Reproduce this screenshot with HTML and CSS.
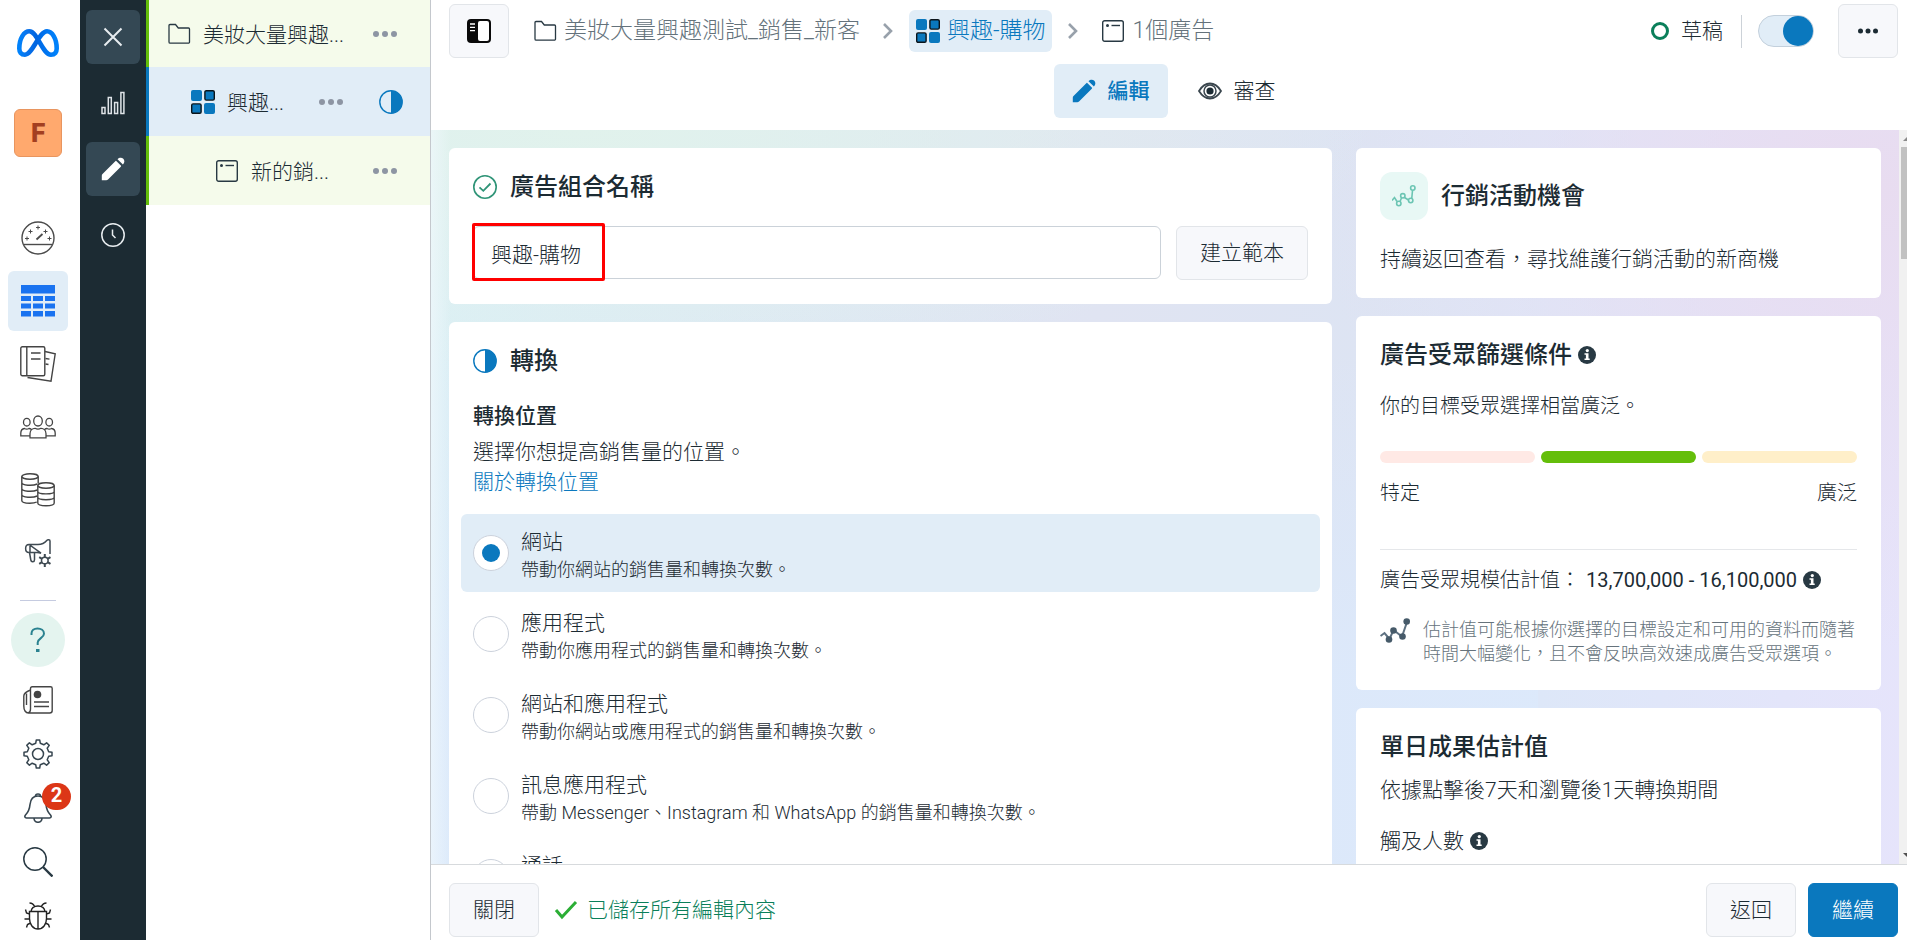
FILE: index.html
```html
<!DOCTYPE html>
<html lang="zh-Hant">
<head>
<meta charset="utf-8">
<title>興趣-購物</title>
<link rel="stylesheet" href="styles.css">
</head>
<body>
<svg width="0" height="0" class="defs" aria-hidden="true">
  <defs>
    <symbol id="folder" viewBox="0 0 24 24"><path d="M2 20V3.500a1 1 0 0 1 1-1h5.500l2.800 3.500H21.500a1 1 0 0 1 1 1V20a1.200 1.200 0 0 1-1.200 1.200H3.200A1.200 1.200 0 0 1 2 20z" fill="none" stroke="#283943" stroke-width="1.300"/></symbol>
    <symbol id="adset" viewBox="0 0 24 24"><g fill="#0a78be"><rect width="11" height="11" rx="2"/><rect x="13" y="13" width="11" height="11" rx="2"/><g stroke="#0b141a" stroke-width="1.400"><rect x="13.900" y=".7" width="9.400" height="9.400" rx="1.400"/><rect x=".7" y="13.900" width="9.400" height="9.400" rx="1.400"/></g></g></symbol>
    <symbol id="ad" viewBox="0 0 24 24"><rect x="1.700" y="1.700" width="20.600" height="20.600" rx="2" fill="none" stroke="#283943" stroke-width="1.400"/><path d="M10.500 6.500h8.500" stroke="#283943" stroke-width="1.400"/><circle cx="6.500" cy="6.500" r="1.500" fill="#283943"/></symbol>
    <symbol id="dots" viewBox="0 0 24 24"><g fill="currentColor"><circle cx="3" cy="12" r="3"/><circle cx="12" cy="12" r="3"/><circle cx="21" cy="12" r="3"/></g></symbol>
    <symbol id="half" viewBox="0 0 24 24"><circle cx="12" cy="12" r="11.200" fill="none" stroke="#0a78be" stroke-width="1.400"/><path d="M12 .8a11.200 11.200 0 0 1 0 22.400z" fill="#0a78be"/></symbol>
    <symbol id="pencil" viewBox="0 0 24 24"><path fill="currentColor" d="M.8 23.200v-4.400c0-.8.200-1.300.7-1.800L14.300 4.200a.8.8 0 0 1 1.200 0l4.300 4.300a.8.8 0 0 1 0 1.200L7 22.500c-.5.500-1 .7-1.800.7zM16.500 2.200c2-2 4.400-1.700 5.800-.4 1.400 1.400 1.600 3.800-.4 5.800z"/></symbol>
    <symbol id="info" viewBox="0 0 18 18"><circle cx="9" cy="9" r="9" fill="currentColor"/><circle cx="9.300" cy="4.600" r="1.600" fill="#fff"/><path d="M6.500 7.300h4v5.200h1.200v1.500H6.500v-1.500h1.400V8.800H6.500z" fill="#fff"/></symbol>
    <symbol id="chev" viewBox="0 0 12 18"><path d="M2 2l7 7-7 7" fill="none" stroke="#98a1ab" stroke-width="2.600"/></symbol>
    <linearGradient id="meta" x1="0" x2="1"><stop offset="0" stop-color="#0082fb"/><stop offset=".2" stop-color="#0a74ec"/><stop offset=".45" stop-color="#0064e0"/><stop offset=".7" stop-color="#0074f0"/><stop offset="1" stop-color="#0082fb"/></linearGradient>
  </defs>
</svg>
<div class="app">
  <nav class="rail" aria-label="主選單">
    <a class="logo" href="#" aria-label="Meta"><svg width="42" height="28" viewBox="0 0 42 28"><path d="M2.300 19.500C2.300 9.500 7 2.300 12.300 2.300 20.500 2.300 25.500 25.700 34 25.700c4 0 5.700-2.700 5.700-6.200C39.700 9.500 35 2.300 30 2.300 22 2.300 15.500 25.700 8 25.700c-4 0-5.700-2.700-5.700-6.200z" fill="none" stroke="url(#meta)" stroke-width="4.600"/></svg></a>
    <button class="account" type="button">F</button>
    <div class="rail-group">
      <button class="nav" type="button" aria-label="總覽"><svg width="34" height="34" viewBox="0 0 34 34" fill="none" stroke="#4b4b4b" stroke-width="1.400"><circle cx="17" cy="17" r="16"/><path d="M3 23.500h28"/><path d="M15.500 18.500l6-5.500" stroke-width="1.800"/><path d="M17 4.500v4M15 6.500h4M9.500 8.500v4M7.500 10.500h4M24.500 8.500v4M22.500 10.500h4M6 15.500v4M4 17.500h4M28.500 15.500v4M26.500 17.500h4" stroke-width="1"/></svg></button>
      <button class="nav nav-on" type="button" aria-label="廣告活動"><svg width="34" height="32" viewBox="0 0 34 32" fill="#1a73f0"><path d="M0 0h34v8.500H0zM0 11h10v5H0zm12 0h10v5H12zm12 0h10v5H24zM0 18.500h10v5H0zm12 0h10v5H12zm12 0h10v5H24zM0 26h10v5.500H0zm12 0h10v5.500H12zm12 0h10v5.500H24z"/></svg></button>
      <button class="nav" type="button" aria-label="報告"><svg width="36" height="36" viewBox="0 0 36 36" fill="none" stroke="#444" stroke-width="1.400"><rect x=".8" y=".8" width="24" height="29" rx="1.500"/><path d="M6.800 1v29M11 7h9.500M11 13h9.500M25 5.500l10.200 2.300L31 35.200 7.500 31.500M25.500 12.500l4 .6M25.500 18l3 .5"/></svg></button>
      <button class="nav" type="button" aria-label="廣告受眾"><svg width="36" height="24" viewBox="0 0 36 24" fill="none" stroke="#444" stroke-width="1.300"><ellipse cx="18" cy="6" rx="4.300" ry="5"/><ellipse cx="6.800" cy="7.200" rx="3.300" ry="3.800"/><ellipse cx="29.200" cy="7.200" rx="3.300" ry="3.800"/><path d="M10 22.800v-4c0-3.500 2.500-5.500 5-5.500 2 1.200 4 1.200 6 0 2.500 0 5 2 5 5.500v4zM10 20.800H.8v-2.500c0-3 1.700-4.600 3.700-4.800 1.500.9 3 .9 4.500 0 1 .1 1.800.5 2.400 1M26 20.800h9.200v-2.500c0-3-1.700-4.600-3.700-4.800-1.500.9-3 .9-4.500 0-1 .1-1.800.5-2.400 1"/></svg></button>
      <button class="nav" type="button" aria-label="帳單"><svg width="34" height="34" viewBox="0 0 34 34" fill="none" stroke="#444" stroke-width="1.400"><ellipse cx="9" cy="3.500" rx="8.200" ry="2.700"/><path d="M.8 3.500v24c0 1.700 3.500 2.700 8 2.700 3 0 5.500-.4 7-1.200M17.200 3.500v7M.8 9.500c0 3.200 11 3.500 15.500 1.500M.8 15.500c0 3.200 11 3.500 15.500 1.500M.8 21.500c0 3.200 11 3.500 15.500 1.500"/><ellipse cx="25" cy="12.500" rx="8.200" ry="2.700"/><path d="M16.800 12.500V30c0 3.600 16.400 3.600 16.400 0V12.500M16.800 18.500c0 3.200 16.400 3.200 16.400 0M16.800 24.300c0 3.200 16.400 3.200 16.400 0"/></svg></button>
      <button class="nav" type="button" aria-label="廣告設定"><svg width="28" height="28" viewBox="0 0 28 28" fill="none" stroke="#3f4a52" stroke-width="1.500"><path d="M5 5.500h9c4 0 7.500-2.500 9-4.300.6-.6 3-.6 3 .8V15M17 14.200c-1-.4-2-.7-4-.7H5C.5 13.500.5 5.500 5 5.500zM6 5.800v7.500M5.500 13.500l1.300 7.500c.4 2.500 3.700 2.300 3.700-.3v-7"/><circle cx="20.800" cy="21.500" r="3.300"/><path d="M20.800 15v3.200M20.800 24.800V28M15.200 18.200l2.800 1.700M23.600 23.100l2.900 1.700M15.200 24.800l2.800-1.700M23.600 19.900l2.900-1.700" stroke-width="2"/></svg></button>
    </div>
    <hr class="rail-line">
    <button class="help" type="button" aria-label="說明"><svg width="16" height="26" viewBox="0 0 16 26" fill="none" stroke="#2b8290" stroke-width="2"><path d="M1.500 8V6.500c0-3 2.500-5 6-5s6.500 2 6.500 5.200c0 4-6.300 4.800-6.300 8.800V18"/><path d="M6 23.500h3.500" stroke-width="3"/></svg></button>
    <div class="rail-tools">
      <button class="tool" type="button" aria-label="最新消息"><svg width="30" height="28" viewBox="0 0 30 28" fill="none" stroke="#444" stroke-width="1.400"><path d="M7.500 2.500c0-1 .7-1.700 1.700-1.700h18.300c1 0 1.700.7 1.700 1.700v22c0 1.700-1 2.500-2.500 2.500H5.500C2.500 27 .8 24 .8 20V10c0-3 3-4.500 6.700-6zM7.500 4v19c0 2-.8 3.500-2.200 4M3.500 7.500V19"/><path d="M11 16h15M11 20.500h15"/><circle cx="14.500" cy="8.500" r="3.800" fill="#444" stroke="none"/></svg></button>
      <button class="tool" type="button" aria-label="設定"><svg width="30" height="30" viewBox="0 0 30 30" fill="none" stroke="#374650" stroke-width="1.500"><circle cx="15" cy="15" r="5.500"/><path d="M13.300 1h3.400l.6 3.300 3.500 1.500 2.800-2 2.600 2.600-2 2.800 1.500 3.500 3.300.6v3.400l-3.300.6-1.500 3.500 2 2.800-2.600 2.600-2.800-2-3.500 1.500-.6 3.300h-3.400l-.6-3.300-3.500-1.500-2.800 2-2.600-2.600 2-2.800-1.500-3.500L1 16.700v-3.400l3.300-.6 1.500-3.500-2-2.800 2.600-2.600 2.800 2 3.500-1.500z" stroke-linejoin="round"/></svg></button>
      <button class="tool" type="button" aria-label="通知，2"><svg width="30" height="30" viewBox="0 0 30 30" fill="none" stroke="#374650" stroke-width="1.600"><path d="M12.500 3.200c0-3 5-3 5 0M15 3c-4.500 0-7.500 3.300-8 8.500C6.600 16 5.500 19 2.500 22c-1.200 1.500-.7 3 1 3h23c1.700 0 2.200-1.500 1-3-3-3-4.100-6-4.500-10.500C22.500 6.300 19.500 3 15 3zM11 25.500c.5 5 7.500 5 8 0"/></svg><span class="count">2</span></button>
      <button class="tool" type="button" aria-label="搜尋"><svg width="30" height="30" viewBox="0 0 30 30" fill="none" stroke="#283943"><circle cx="12" cy="12" r="11.200" stroke-width="1.500"/><path d="M20 20l9.500 9.500" stroke-width="2.400"/></svg></button>
      <button class="tool" type="button" aria-label="回報問題"><svg width="28" height="28" viewBox="0 0 28 28" fill="none" stroke="#222" stroke-width="1.400"><path d="M5.500 9.500h17v7c0 6-3.500 10.500-8.500 10.500S5.500 22.500 5.500 16.500zM7 9.500c.5-3.500 3.500-5.500 7-5.500s6.500 2 7 5.500M14 9.500V27M10.500 4.500C9.500 2 8 1 5.500 1M17.500 4.500c1-2.500 2.500-3.500 5-3.500M5.500 12L2.500 11 1.500 7.500M22.500 12l3-1 1-3.500M5.500 17H.5M22.500 17h5M6.500 21l-3 1.500-1 3M21.500 21l3 1.500 1 3"/></svg></button>
    </div>
  </nav>

  <nav class="modes" aria-label="檢視">
    <button class="mode mode-on" type="button" aria-label="關閉"><svg width="20" height="20" viewBox="0 0 20 20"><path d="M1.500 1.500l17 17m0-17l-17 17" stroke="#e8edf0" stroke-width="2"/></svg></button>
    <button class="mode" type="button" aria-label="圖表"><svg width="24" height="24" viewBox="0 0 24 24" fill="none" stroke="#dfe4e8" stroke-width="1.500"><rect x="1" y="16.500" width="3" height="6"/><rect x="7.300" y="6.500" width="3" height="16"/><rect x="13.600" y="11.500" width="3" height="11"/><rect x="19.900" y="1.500" width="3" height="21"/></svg></button>
    <button class="mode mode-on" type="button" aria-label="編輯"><svg width="24" height="24"><use href="#pencil"/></svg></button>
    <button class="mode" type="button" aria-label="紀錄"><svg width="24" height="24" viewBox="0 0 24 24" fill="none" stroke="#e8edf0" stroke-width="1.500"><circle cx="12" cy="12" r="11.200"/><path d="M11.500 6.500V12l3 3"/></svg></button>
  </nav>

  <aside class="tree">
    <div class="row row-top">
      <svg width="24" height="24"><use href="#folder"/></svg><span class="row-name">美妝大量興趣...</span>
      <button class="more" type="button" aria-label="更多"><svg width="24" height="24"><use href="#dots"/></svg></button>
    </div>
    <div class="row row-set">
      <svg width="24" height="24"><use href="#adset"/></svg><span class="row-name">興趣...</span>
      <button class="more" type="button" aria-label="更多"><svg width="24" height="24"><use href="#dots"/></svg></button>
      <svg width="24" height="24"><use href="#half"/></svg>
    </div>
    <div class="row row-ad">
      <svg width="24" height="24"><use href="#ad"/></svg><span class="row-name">新的銷...</span>
      <button class="more" type="button" aria-label="更多"><svg width="24" height="24"><use href="#dots"/></svg></button>
    </div>
  </aside>

  <main class="main">
    <header class="head">
      <div class="topbar">
        <button class="btn btn-icon" type="button" aria-label="切換側欄"><svg width="24" height="24" viewBox="0 0 24 24"><rect width="24" height="24" rx="4" fill="#0a0a0a"/><rect x="11" y="2" width="11" height="20" rx="2" fill="#fff"/><path d="M3 5h5M3 8.300h5M3 11.600h5" stroke="#fff" stroke-width="1.300"/></svg></button>
        <nav class="crumbs" aria-label="路徑">
          <a class="crumb" href="#"><svg width="24" height="24"><use href="#folder"/></svg>美妝大量興趣測試_銷售_新客</a>
          <svg width="12" height="18"><use href="#chev"/></svg>
          <a class="crumb crumb-on" href="#"><svg width="24" height="24"><use href="#adset"/></svg>興趣-購物</a>
          <svg width="12" height="18"><use href="#chev"/></svg>
          <a class="crumb" href="#"><svg width="24" height="24"><use href="#ad"/></svg>1個廣告</a>
        </nav>
        <div class="status"><span class="ring"></span>草稿</div>
        <input class="switch" type="checkbox" role="switch" aria-label="啟用" checked>
        <button class="btn btn-icon" type="button" aria-label="更多選項"><svg width="20" height="20"><use href="#dots"/></svg></button>
      </div>
      <div class="tabs">
        <button class="tab tab-on" type="button"><svg width="24" height="24"><use href="#pencil"/></svg>編輯</button>
        <button class="tab" type="button"><svg width="24" height="18" viewBox="0 0 24 18"><path d="M1 9c3-5 6.500-7.500 11-7.500S20 4 23 9c-3 5-6.500 7.500-11 7.500S4 14 1 9z" fill="none" stroke="#3a464e" stroke-width="1.800"/><circle cx="12" cy="9" r="6" fill="none" stroke="#3a464e" stroke-width="1.500"/><circle cx="12" cy="9" r="3.600" fill="#1c2b33"/></svg>審查</button>
      </div>
    </header>

    <div class="scroll">
      <div class="content">
        <div class="col">
          <section class="card">
            <h2 class="title"><svg width="24" height="24" viewBox="0 0 24 24" fill="none" stroke="#2f9477"><circle cx="12" cy="12" r="11.200" stroke-width="1.600"/><path d="M6.500 12.300l3.800 3.500 7.200-7.300" stroke-width="1.800"/></svg><label for="name">廣告組合名稱</label></h2>
            <div class="name-row">
              <div class="field"><input id="name" class="text" type="text" value="興趣-購物"><span class="mark"></span></div>
              <button class="btn btn-template" type="button">建立範本</button>
            </div>
          </section>
          <section class="card">
            <h2 class="title"><svg width="24" height="24"><use href="#half"/></svg>轉換</h2>
            <h3 class="subtitle">轉換位置</h3>
            <p class="para">選擇你想提高銷售量的位置。</p>
            <a class="link" href="#">關於轉換位置</a>
            <div class="options" role="radiogroup" aria-label="轉換位置">
              <label class="option option-on"><input class="radio" type="radio" name="place" checked><span class="option-text">網站<small>帶動你網站的銷售量和轉換次數。</small></span></label>
              <label class="option"><input class="radio" type="radio" name="place"><span class="option-text">應用程式<small>帶動你應用程式的銷售量和轉換次數。</small></span></label>
              <label class="option"><input class="radio" type="radio" name="place"><span class="option-text">網站和應用程式<small>帶動你網站或應用程式的銷售量和轉換次數。</small></span></label>
              <label class="option"><input class="radio" type="radio" name="place"><span class="option-text">訊息應用程式<small>帶動 Messenger、Instagram 和 WhatsApp 的銷售量和轉換次數。</small></span></label>
              <label class="option"><input class="radio" type="radio" name="place"><span class="option-text">通話</span></label>
            </div>
          </section>
        </div>
        <div class="col">
          <section class="card">
            <h2 class="title title-badge"><span class="badge"><svg width="24" height="24" viewBox="0 0 24 24" fill="none" stroke="#6cc5b3" stroke-width="1.600"><path d="M0 16.500l2.500-3 2.500 4M8 17.500l1.500-3.500M12.500 13.500l4 2.500M19.800 14l.7-7.500"/><circle cx="6.800" cy="19.500" r="2.200"/><circle cx="10.800" cy="11.800" r="2.200"/><circle cx="18.700" cy="16.500" r="2.200"/><circle cx="20.800" cy="4" r="2.200"/></svg></span>行銷活動機會</h2>
            <p class="para para-tip">持續返回查看，尋找維護行銷活動的新商機</p>
          </section>
          <section class="card">
            <h2 class="title title-side">廣告受眾篩選條件<svg class="info" width="18" height="18"><use href="#info"/></svg></h2>
            <p class="copy">你的目標受眾選擇相當廣泛。</p>
            <div class="meter"><span class="seg seg-low"></span><span class="seg seg-mid"></span><span class="seg seg-high"></span></div>
            <div class="ends"><span>特定</span><span>廣泛</span></div>
            <p class="size">廣告受眾規模估計值：<span class="num">13,700,000 - 16,100,000</span><svg class="info" width="18" height="18"><use href="#info"/></svg></p>
            <div class="note"><svg width="30" height="26" viewBox="0 0 30 26" fill="#465a69" stroke="#5d7080" stroke-width="2"><path d="M.5 18l4-3 5 6 4-9 8.500 6.500L27 4" fill="none"/><g stroke="none"><circle cx="9" cy="21.500" r="3.300"/><circle cx="13.500" cy="12.500" r="3.300"/><circle cx="22.500" cy="18.500" r="3.300"/><circle cx="26.700" cy="3.500" r="3.300"/></g></svg><p>估計值可能根據你選擇的目標設定和可用的資料而隨著時間大幅變化，且不會反映高效速成廣告受眾選項。</p></div>
          </section>
          <section class="card">
            <h2 class="title title-side">單日成果估計值</h2>
            <p class="para para-day">依據點擊後7天和瀏覽後1天轉換期間</p>
            <p class="para para-reach">觸及人數<svg class="info" width="18" height="18"><use href="#info"/></svg></p>
          </section>
        </div>
      </div>
      <div class="bar" aria-hidden="true">
        <svg width="8" height="17" viewBox="0 0 8 17"><path d="M4 11l5-5 5 5z" fill="#8a8a8a"/></svg>
        <span class="thumb"></span>
        <svg width="8" height="17" viewBox="0 0 8 17"><path d="M4 6l5 5 5-5z" fill="#505050"/></svg>
      </div>
    </div>

    <footer class="foot">
      <button class="btn btn-foot" type="button">關閉</button>
      <p class="saved"><svg width="24" height="20" viewBox="0 0 24 20"><path d="M2 10l6 7L22 2" fill="none" stroke="#2bae35" stroke-width="3"/></svg>已儲存所有編輯內容</p>
      <button class="btn btn-foot" type="button">返回</button>
      <button class="btn btn-foot btn-primary" type="button">繼續</button>
    </footer>
  </main>
</div>
</body>
</html>
```

FILE: styles.css
```css
* { box-sizing: border-box; margin: 0; padding: 0; }

:root {
  --ink: #1c2b33;
  --blue: #0a78be;
  --pale: #e1edf7;
  --line: #e2e5e9;
}

body {
  color: var(--ink);
  font: 300 21px/30px Roboto, "Noto Sans CJK TC", sans-serif;
}

button, input { font: inherit; color: inherit; }
button { background: none; border: 0; cursor: pointer; }
a { text-decoration: none; color: inherit; }
svg { display: block; flex: none; }
.defs { position: absolute; }

.app {
  display: grid;
  grid-template-columns: 80px 66px 285px minmax(0, 1fr);
  height: 100vh;
  overflow: hidden;
  background: #fff;
}

/* Primary rail */
.rail {
  display: flex;
  flex-direction: column;
  align-items: center;
  padding: 29px 4px 0 0;
}
.logo { margin-bottom: 52px; }
.account {
  flex: none;
  width: 48px;
  height: 48px;
  margin-bottom: 51px;
  border: 1px solid #e8955f;
  border-radius: 6px;
  background: #ffa96e;
  color: #a33f20;
  font-size: 26px;
  font-weight: 900;
}
.rail-group { display: flex; flex-direction: column; gap: 3px; }
.nav {
  display: grid;
  place-items: center;
  width: 60px;
  height: 60px;
  border-radius: 6px;
}
.nav-on { background: var(--pale); }
.rail-line { flex: none; width: 36px; margin: 17px 0 12px; border: 0; border-top: 1px solid #c5cbe0; }
.help {
  flex: none;
  display: grid;
  place-items: center;
  width: 54px;
  height: 54px;
  margin-bottom: 6px;
  border-radius: 50%;
  background: #e4f4ef;
}
.rail-tools { display: flex; flex-direction: column; }
.tool {
  position: relative;
  display: grid;
  place-items: center;
  width: 54px;
  height: 54px;
}
.count {
  position: absolute;
  top: 2px;
  right: -6px;
  width: 29px;
  height: 27px;
  border-radius: 14px;
  background: #dc3617;
  color: #fff;
  font-size: 20px;
  font-weight: 700;
  line-height: 25px;
}

/* Mode rail */
.modes {
  display: flex;
  flex-direction: column;
  align-items: center;
  gap: 12px;
  padding-top: 10px;
  background: #1c2b33;
}
.mode {
  display: grid;
  place-items: center;
  width: 54px;
  height: 54px;
  border-radius: 6px;
  color: #fff;
}
.mode-on { background: #344854; }

/* Structure tree */
.tree { border-right: 1px solid #c4c8cd; }
.row {
  display: flex;
  align-items: center;
  height: 69px;
  padding: 0 33px 0 51px;
  border-left: 3px solid #64be0a;
  background: #f5fbeb;
}
.row-top { height: 67px; padding-left: 18px; }
.row-set { padding: 0 27px 0 42px; border-color: var(--blue); background: var(--pale); }
.row-ad { padding-left: 66px; }
.row-name { flex: 1; padding: 3px 0 0 12px; white-space: nowrap; }
.more { color: #8d95a3; }
.row-set .more { margin-right: 36px; }

/* Header */
.main { display: flex; flex-direction: column; min-width: 0; height: 100vh; }
.head { flex: none; height: 130px; padding: 4px 9px 0 18px; }
.topbar { display: flex; align-items: center; }
.btn {
  flex: none;
  height: 54px;
  border: 1px solid var(--line);
  border-radius: 6px;
  background: #f7f8fb;
}
.btn-icon { display: grid; place-items: center; width: 60px; }
.crumbs { display: flex; flex: 1; align-items: center; gap: 15px; padding-left: 17px; }
.crumb {
  display: flex;
  align-items: center;
  gap: 7px;
  height: 42px;
  padding: 0 7px;
  border-radius: 6px;
  color: #64727b;
  font-size: 23px;
  white-space: nowrap;
}
.crumb-on { background: var(--pale); color: var(--blue); }
.status {
  display: flex;
  align-items: center;
  gap: 12px;
  height: 33px;
  padding-right: 18px;
  border-right: 1px solid #ccd2d8;
}
.ring { width: 18px; height: 18px; border: 3px solid #0a7f5a; border-radius: 50%; }
.switch {
  appearance: none;
  display: flex;
  justify-content: flex-end;
  width: 56px;
  height: 32px;
  margin: 0 24px 0 16px;
  border: 1px solid #c3d0dc;
  border-radius: 16px;
  background: var(--pale);
}
.switch::before { content: ""; width: 30px; height: 30px; border-radius: 50%; background: var(--blue); }
.tabs { display: flex; justify-content: center; gap: 12px; padding-top: 6px; }
.tab {
  display: flex;
  align-items: center;
  gap: 12px;
  height: 54px;
  padding: 0 18px;
  border-radius: 6px;
}
.tab-on { background: var(--pale); color: var(--blue); font-weight: 500; }

/* Editor */
.scroll {
  display: flex;
  flex: 1;
  min-height: 0;
  overflow: hidden;
  background:
    linear-gradient(90deg, rgba(240, 248, 252, 0.7), rgba(240, 248, 252, 0) 20px),
    radial-gradient(800px 240px at 10% 0, #e1f2ec, rgba(225, 242, 236, 0)),
    radial-gradient(560px 460px at 98% 8%, #e8dcf0, rgba(232, 220, 240, 0)),
    linear-gradient(180deg, rgba(220, 233, 251, 0) 30%, rgba(220, 233, 251, 0.9) 75%) 0 0 / 75% 100% no-repeat,
    linear-gradient(90deg, #dbeff5, #e0e4f2 45%, #dde4f3 64%, #dde7f8 75%, #e6e4fb);
}
.content {
  display: grid;
  flex: 1;
  grid-template-columns: minmax(0, 883fr) minmax(0, 525fr);
  gap: 24px;
  padding: 18px 18px 0;
}
.col { display: flex; flex-direction: column; gap: 18px; }
.card { flex: none; padding: 24px; border-radius: 6px; background: #fff; }
.title {
  display: flex;
  align-items: center;
  gap: 13px;
  height: 30px;
  font-size: 24px;
  font-weight: 500;
}
.name-row { display: flex; gap: 15px; padding-top: 24px; }
.field { position: relative; flex: 1; }
.text {
  width: 100%;
  height: 53px;
  padding: 0 17px;
  border: 1px solid #cbd2d9;
  border-radius: 6px;
  background: #fff;
}
.mark { position: absolute; top: -3px; left: -1px; width: 133px; height: 58px; border: 3px solid #f00; border-radius: 2px; }
.btn-template { width: 132px; }
.subtitle { padding-top: 25px; font-size: 21px; font-weight: 500; }
.para { padding-top: 6px; }
.link { color: var(--blue); }
.options { display: flex; flex-direction: column; gap: 3px; margin: 17px -12px 0; }
.option { display: flex; gap: 12px; height: 78px; padding: 0 12px; border-radius: 6px; }
.option-on { background: var(--pale); }
.option-text { display: flex; flex-direction: column; padding-top: 15px; line-height: 27px; }
.option-text small { font-size: 18px; }
.radio {
  appearance: none;
  display: grid;
  place-items: center;
  width: 36px;
  height: 36px;
  margin-top: 21px;
  border: 1px solid #ccd2dc;
  border-radius: 50%;
  background: #fff;
}
.radio:checked::before { content: ""; width: 18px; height: 18px; border-radius: 50%; background: var(--blue); }

/* Side cards */
.title-badge { height: 48px; }
.badge { display: grid; place-items: center; width: 48px; height: 48px; border-radius: 12px; background: #e8f8f5; }
.para-tip { padding-top: 24px; }
.title-side { gap: 6px; }
.info { color: #283943; }
.copy { padding-top: 21px; font-size: 20px; }
.meter { display: grid; grid-template-columns: repeat(3, 1fr); gap: 6px; padding-top: 30px; }
.seg { height: 12px; border-radius: 6px; }
.seg-low { background: #ffe9e5; }
.seg-mid { background: #64be0a; }
.seg-high { background: #ffefc9; }
.ends {
  display: flex;
  justify-content: space-between;
  padding: 15px 0 41px;
  border-bottom: 1px solid #e5e7ea;
  font-size: 20px;
}
.size { display: flex; align-items: center; padding-top: 15px; font-size: 20px; }
.num { padding: 0 6px; font-weight: 400; }
.note { display: flex; gap: 13px; padding-top: 23px; color: #66737c; font-size: 18px; line-height: 24px; }
.para-day { padding-top: 13px; }
.para-reach { display: flex; align-items: center; gap: 6px; padding-top: 21px; }

.bar { display: flex; flex: none; flex-direction: column; width: 8px; background: #f1f1f1; }
.thumb { height: 112px; margin: 0 0 auto 2px; background: #c1c1c1; }

/* Footer */
.foot {
  display: flex;
  flex: none;
  gap: 12px;
  height: 76px;
  padding: 18px 9px 0 18px;
  border-top: 1px solid #d7dadd;
}
.btn-foot { width: 90px; }
.saved { display: flex; flex: 1; align-items: center; gap: 9px; height: 54px; padding-left: 3px; color: #0a7f5a; }
.btn-primary { border-color: var(--blue); background: var(--blue); color: #fff; }
```
